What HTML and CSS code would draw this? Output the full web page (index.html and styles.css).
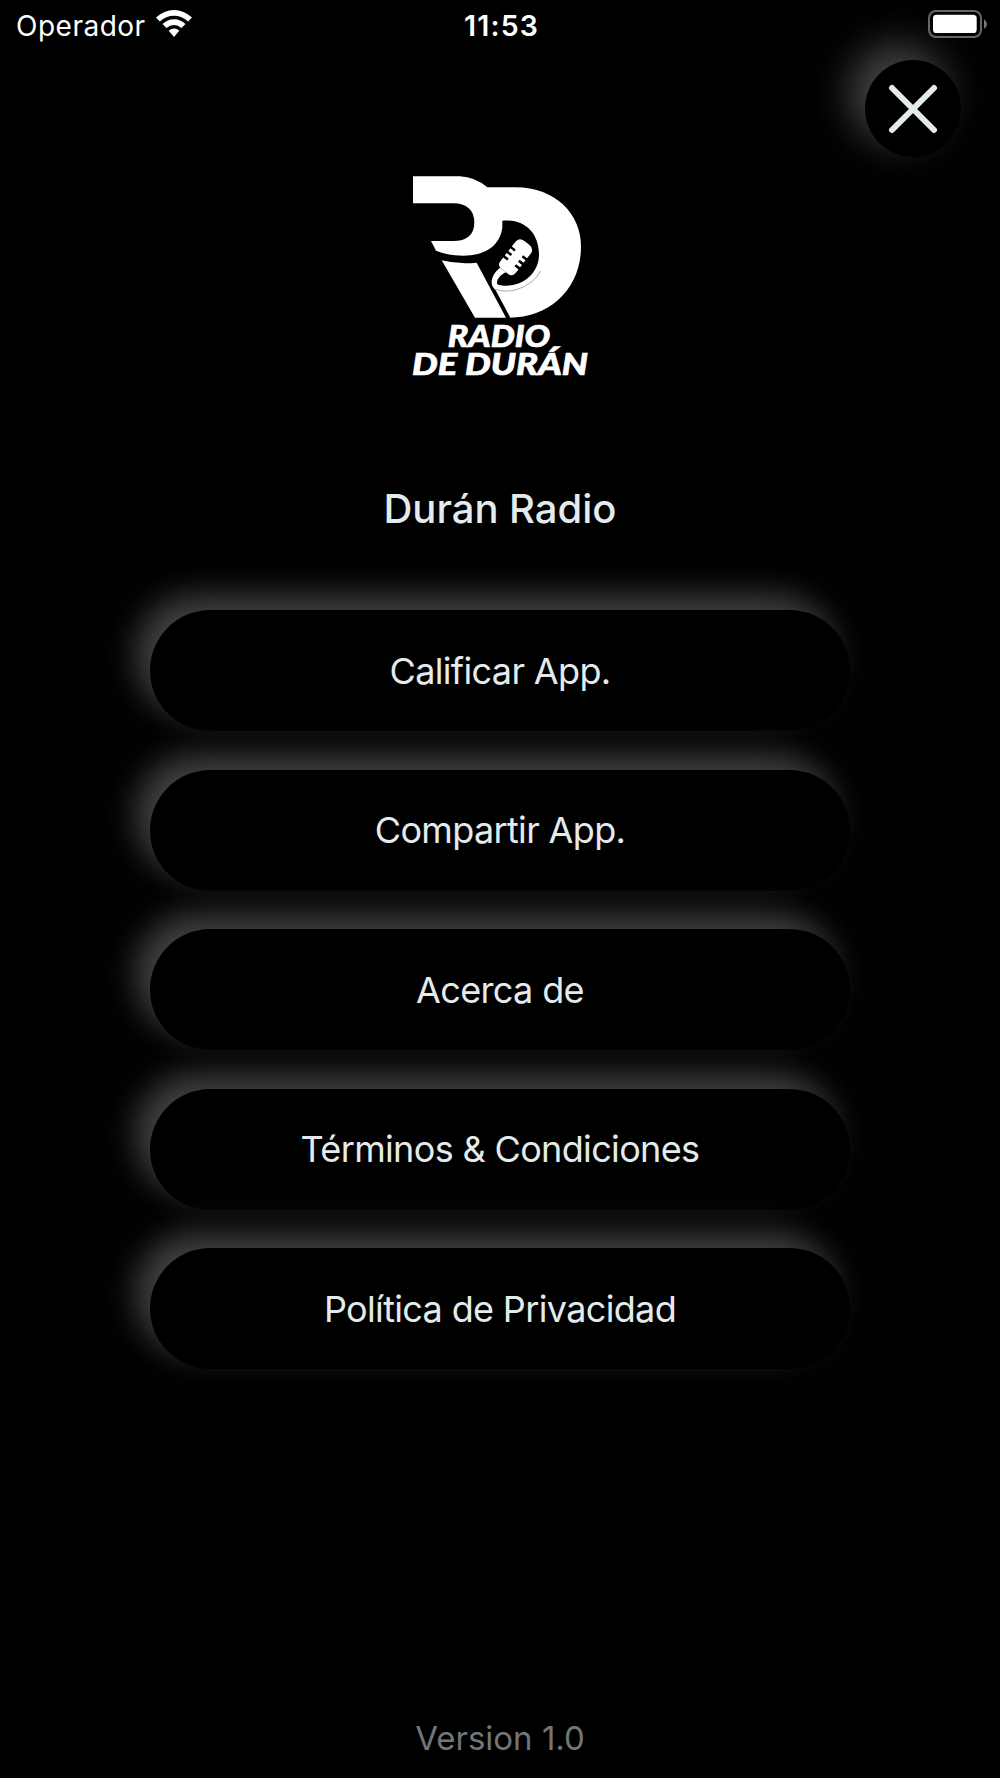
FILE: index.html
```
<!DOCTYPE html>
<html lang="es">
<head>
    <meta charset="UTF-8">
    <meta name="viewport" content="width=device-width, initial-scale=1.0">
    <title>Durán Radio</title>
    <link rel="stylesheet" href="styles.css">
</head>
<body>
    <div class="status-bar">
        <div class="carrier">
            <span class="carrier-name">Operador</span>
            <svg class="wifi" viewBox="0 0 36 27">
                <path d="M0 7.6Q8 0 18 0t18 7.6l-3.9 4Q26 5.7 18 5.7T3.9 11.6z"/>
                <path d="M6.5 14.1Q11.5 9.3 18 9.3t11.5 4.8l-4 4Q22.2 15 18 15t-7.5 3.1z"/>
                <path d="M12.7 20.7Q15 18.6 18 18.6t5.3 2.1L18 27z"/>
            </svg>
        </div>
        <span class="time">11:53</span>
        <svg class="battery" viewBox="0 0 60 28">
            <rect class="battery-case" x="1" y="1" width="52" height="26" rx="7"/>
            <rect class="battery-level" x="5" y="4.7" width="43.7" height="18.3" rx="3.6"/>
            <path class="battery-tip" d="M56 9.2Q59 11 59 14t-3 4.8z"/>
        </svg>
    </div>

    <div class="top">
        <button class="close" aria-label="Cerrar">
            <svg viewBox="0 0 50 50">
                <path d="M4 4l42 42M46 4L4 46"/>
            </svg>
        </button>
    </div>

    <div class="main">
        <svg class="logo" viewBox="0 0 600 660">
            <!-- D with the counter and the cable -->
            <path d="M250 67H345C470 67 543 150 543 245C543 370 450 458 328 458L225 293Z"/>
            <path class="cut" d="M307 167C375 160 417 205 417 268C417 325 370 362 320 362C300 362 291 360 291 354C291 340 305 328 318 322L300 308C280 325 275 340 275 352C275 362 280 370 287 376L331 458H318L225 293L200 260Z"/>
            <path class="thin" d="M286 373Q315 383 350 374Q400 358 422 318"/>
            <!-- R -->
            <path d="M39 34H180Q225 36 262 67L307 167V185C303 238 258 272 190 272Q145 272 108 257L93 228H160C199 228 223 212 223 172C223 135 199 115 160 115H39Z"/>
            <path d="M125 286Q175 299 230 293L318 458H225Z"/>
            <!-- microphone -->
            <g transform="translate(346 278) rotate(38)">
                <path d="M-29 -20V-37Q-29 -56 -8 -56H8Q29 -56 29 -37V-20H14V-13H29V-3H14V5H29V14H14V22H29V36Q29 52 12 52H-12Q-29 52 -29 36V22H-14V14H-29V5H-14V-3H-29V-13H-14V-20Z"/>
            </g>
            <text class="logo-text" x="143" y="545" textLength="308" lengthAdjust="spacingAndGlyphs">RADIO</text>
            <text class="logo-text" x="36" y="629" textLength="528" lengthAdjust="spacingAndGlyphs">DE DURÁN</text>
        </svg>

        <h1>Durán Radio</h1>

        <div class="menu">
            <button class="item">Calificar App.</button>
            <button class="item">Compartir App.</button>
            <button class="item">Acerca de</button>
            <button class="item">Términos &amp; Condiciones</button>
            <button class="item">Política de Privacidad</button>
        </div>
    </div>

    <div class="version">Version 1.0</div>
</body>
</html>
```
FILE: styles.css
```
* {
    box-sizing: border-box;
}
body {
    font-family: Inter, sans-serif;
    margin: 0;
    height: 1778px;
    display: flex;
    flex-direction: column;
    background-color: #000;
    color: #e4ebec;
    overflow: hidden;
}
button {
    font-family: inherit;
    color: inherit;
    background-color: #000;
    border: none;
    padding: 0;
    cursor: pointer;
}
.status-bar {
    display: grid;
    grid-template-columns: 1fr auto 1fr;
    align-items: center;
    height: 50px;
    padding: 0 12px 0 16px;
    color: #fff;
    position: relative;
    z-index: 1;
}
.carrier {
    display: flex;
    align-items: center;
    gap: 10px;
}
.carrier-name {
    font-size: 28px;
    letter-spacing: 0.5px;
    padding-top: 1px;
}
.wifi {
    width: 36px;
    height: 27px;
    fill: #fff;
    margin-bottom: 3px;
}
.time {
    font-size: 28.5px;
    font-weight: 600;
    letter-spacing: 1.2px;
    padding-top: 1px;
    margin-right: 1px;
}
.battery {
    width: 60px;
    height: 28px;
    justify-self: end;
    margin-bottom: 2px;
}
.battery-case {
    fill: none;
    stroke: #666;
    stroke-width: 2;
}
.battery-level {
    fill: #fff;
}
.battery-tip {
    fill: #777;
}
.top {
    display: flex;
    justify-content: flex-end;
    padding: 10px 39px 0 0;
}
.close {
    width: 96px;
    height: 97px;
    border-radius: 50%;
    display: flex;
    justify-content: center;
    align-items: center;
    box-shadow: -15px -15px 40px #484848;
}
.close svg {
    width: 50px;
    height: 50px;
    fill: none;
    stroke: #e4ebec;
    stroke-width: 6;
    stroke-linecap: round;
}
.main {
    flex: 1;
    display: flex;
    flex-direction: column;
    align-items: center;
    padding-top: 8px;
}
.logo {
    width: 200px;
    height: 220px;
    fill: #fff;
}
.logo .cut {
    fill: #000;
}
.logo .thin {
    fill: none;
    stroke: #555;
    stroke-width: 1.5;
}
.logo-text {
    font-family: Lato, sans-serif;
    font-size: 90px;
    font-weight: 900;
    font-style: italic;
    stroke: #fff;
    stroke-width: 2;
}
h1 {
    margin: 100px 0 0;
    font-size: 40px;
    line-height: 48px;
    font-weight: 550;
}
.menu {
    display: flex;
    flex-direction: column;
    gap: 38.5px;
    width: 700px;
    margin-top: 77px;
}
.item {
    height: 121px;
    border-radius: 61px;
    font-size: 36px;
    letter-spacing: -0.65px;
    box-shadow: -15px -15px 32px #424242;
}
.version {
    height: 80px;
    line-height: 80px;
    text-align: center;
    font-size: 33px;
    color: #727677;
}
```
